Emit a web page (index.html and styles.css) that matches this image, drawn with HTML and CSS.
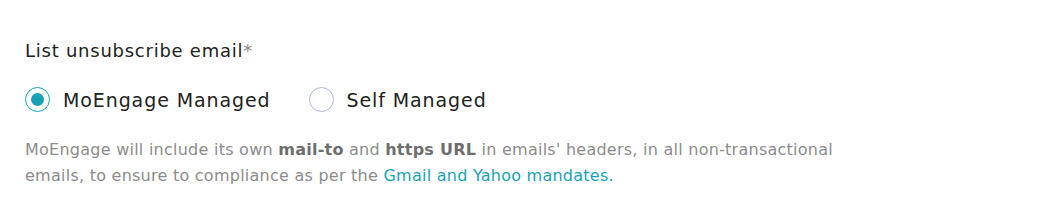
FILE: index.html
```html
<!DOCTYPE html>
<html lang="en">
<head>
  <meta charset="UTF-8" />
  <title>List unsubscribe email</title>
  <link rel="stylesheet" href="styles.css">
</head>
<body>
  <div class="field">
    <div class="field-label">List unsubscribe email<span class="req">*</span></div>

    <div class="radio-group">
      <label class="radio checked">
        <span class="radio-circle"></span>
        <span class="radio-text">MoEngage Managed</span>
      </label>
      <label class="radio">
        <span class="radio-circle"></span>
        <span class="radio-text">Self Managed</span>
      </label>
    </div>

    <p class="help">
      MoEngage will include its own <b>mail-to</b> and <b>https URL</b> in emails' headers, in all non-transactional<br>
      emails, to ensure to compliance as per the <a href="#">Gmail and Yahoo mandates.</a>
    </p>
  </div>
</body>
</html>
```

FILE: styles.css
```css
* {
  box-sizing: border-box;
}

body {
  margin: 0;
  background: #fff;
  font-family: 'DejaVu Sans', 'Open Sans', sans-serif;
  color: #222;
}

.field {
  padding: 39px 25px 0;
}

.field-label {
  font-size: 18px;
  line-height: 24px;
  letter-spacing: 0.75px;
  color: #222;
}

.req {
  color: #888;
}

.radio-group {
  display: flex;
  align-items: center;
  gap: 38px;
  margin-top: 24px;
}

.radio {
  display: flex;
  align-items: center;
  gap: 13px;
  cursor: pointer;
}

.radio-circle {
  width: 25px;
  height: 25px;
  border-radius: 50%;
  border: 1px solid #aab8dc;
  display: flex;
  align-items: center;
  justify-content: center;
}

.radio.checked .radio-circle {
  border-color: #1ba6b8;
}

.radio.checked .radio-circle::after {
  content: "";
  width: 13px;
  height: 13px;
  border-radius: 50%;
  background: #13a3b5;
}

.radio-text {
  font-size: 19px;
  line-height: 24px;
  letter-spacing: 0.9px;
  color: #222;
}

.help {
  margin: 25px 0 0;
  font-size: 16px;
  line-height: 26px;
  letter-spacing: 0.25px;
  color: #8c8c8c;
}

.help b {
  color: #6e6e6e;
  font-weight: 700;
}

.help a {
  color: #17a3b6;
  text-decoration: none;
}
```
